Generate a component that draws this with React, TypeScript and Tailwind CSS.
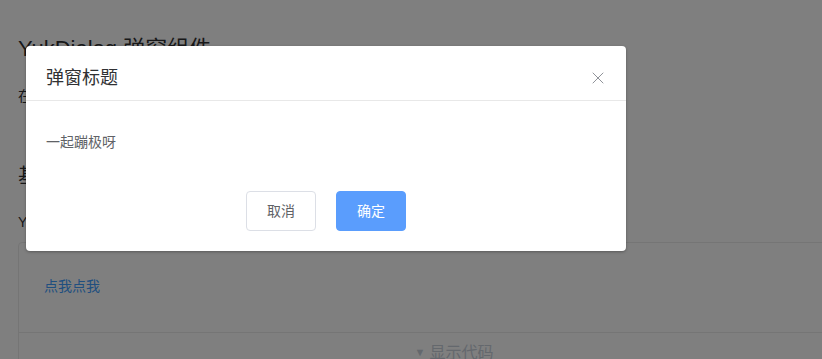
import { X } from "lucide-react";

const font = { fontFamily: '"Helvetica Neue", "Liberation Sans", "Noto Sans CJK SC", sans-serif' };

export default function App() {
  return (
    <div className="relative h-[359px] w-[822px] overflow-hidden bg-white text-[#303133]" style={font}>
      {/* page behind the mask */}
      <div className="pl-[18px] pt-[33px]">
        <h1 className="text-[22px] leading-[32px] font-normal">YukDialog 弹窗组件</h1>
        <p className="mt-[21px] text-sm leading-5 text-[#303133]">在保留当前页面状态的情况下，告知用户并承载相关操作。</p>
        <h2 className="mt-[56px] text-[20px] leading-[28px] font-normal">基本用法</h2>
        <p className="mt-[22px] text-sm leading-5 text-[#303133]">YukDialog 弹出一个对话框，适合需要定制性更大的场景。</p>
        <div className="mt-[10px] w-[872px] rounded-t border border-[#ebebeb]">
          <div className="h-[89px] px-[25px] pt-[31px]">
            <span className="text-sm leading-5 text-[#409eff]">点我点我</span>
          </div>
          <div className="flex h-[40px] items-center justify-center gap-1 border-t border-[#ebebeb] text-base text-[#c8d0da]">
            <span className="text-[11px]">▼</span>
            <span>显示代码</span>
          </div>
        </div>
      </div>

      {/* mask */}
      <div className="absolute inset-0 bg-black/50" />

      {/* dialog */}
      <div className="absolute left-[26px] top-[46px] w-[600px] rounded-sm bg-white shadow-[0_1px_3px_rgba(0,0,0,0.3)]">
        <div className="flex items-center justify-between border-b border-[#e8e8e8] pt-5 pb-[10px] pl-5 pr-[18px]">
          <span className="text-[18px] leading-6 text-[#303133]">弹窗标题</span>
          <X size={20} strokeWidth={1.2} className="text-[#909399]" />
        </div>
        <div className="px-5 pt-[31px] pb-[19px]">
          <p className="text-sm leading-5 text-[#606266]">一起蹦极呀</p>
        </div>
        <div className="flex justify-center gap-5 pt-5 pb-5">
          <button className="h-10 w-[70px] rounded border border-[#dcdfe6] bg-white text-sm text-[#606266]">取消</button>
          <button className="h-10 w-[70px] rounded border border-[#5a9dfd] bg-[#5a9dfd] text-sm text-white">确定</button>
        </div>
      </div>
    </div>
  );
}
